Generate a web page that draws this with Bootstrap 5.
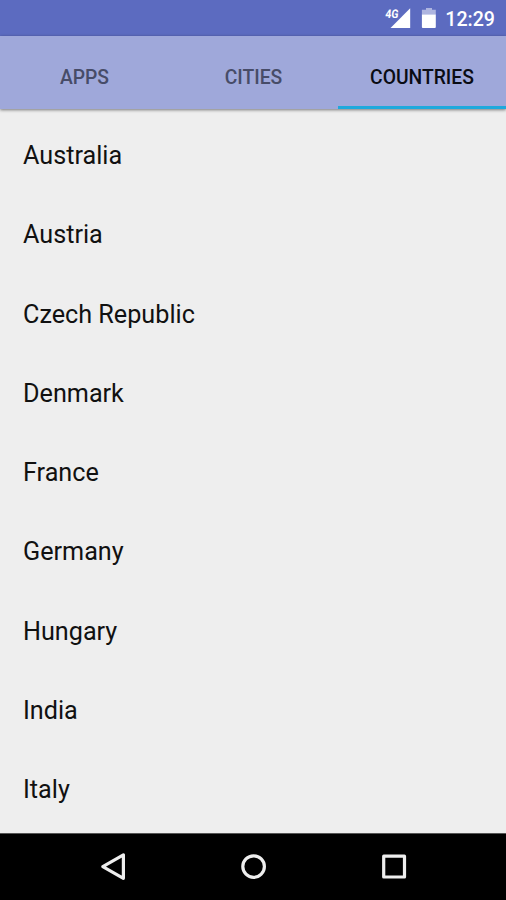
<!DOCTYPE html>
<html lang="en">
<head>
<meta charset="utf-8">
<meta name="viewport" content="width=device-width, initial-scale=1">
<title>Countries</title>
<link href="https://cdn.jsdelivr.net/npm/bootstrap@5.3.0/dist/css/bootstrap.min.css" rel="stylesheet">
<style>
body{font-family:Roboto,"Noto Sans",sans-serif;background:#eee;height:900px;overflow:hidden;color:#111}
.status-bar{height:36px;background:#5c6bc0;padding-right:11px}
.clock{width:50px;font-size:19.6px;font-weight:500;line-height:36px;padding-top:3px;text-align:right}
.tab-strip{height:73px;background:#9fa8da;box-shadow:0 1px 3px rgba(0,0,0,.5);z-index:1}
.tab-strip .nav-link{height:73px;line-height:83px;padding:0;font-size:19.3px;font-weight:500;color:#474c68;border-radius:0;white-space:nowrap}
.tab-strip .nav-link.active{color:#0a0c14;border-bottom:3px solid #1fa9dc}
.tab-strip .nav-link{flex:0 0 169px}
.tab-strip .nav-link.active{flex:0 0 168px}
.countries{padding-top:7px}
.countries .list-group-item{height:79.25px;padding:0 23px;font-size:25.2px;background:transparent;color:#111;line-height:1}
.system-nav{height:67px;border-top:1px solid #555}
svg{display:block}
</style>
</head>
<body class="d-flex flex-column">
<header class="status-bar text-white d-flex justify-content-end align-items-center flex-shrink-0">
<svg width="61" height="36" viewBox="384 0 61 36" fill="#fff" aria-hidden="true">
<path d="M410.2 8.3V28H390.5Z"/>
<text transform="translate(385 17.8) skewX(-6)" font-size="12" font-weight="700" textLength="13" lengthAdjust="spacingAndGlyphs">4G</text>
<path d="M426 8h6v1.7h3.8v5H421.9v-5H426z" fill-opacity=".5"/>
<path d="M421.9 14.5h13.9V27q0 1-1 1h-11.9q-1 0-1-1z"/>
</svg>
<span class="clock">12:29</span>
</header>
<nav class="tab-strip nav position-relative flex-shrink-0 text-center">
<a class="nav-link" href="#">APPS</a><a class="nav-link" href="#">CITIES</a><a class="nav-link active" href="#" aria-current="page">COUNTRIES</a>
</nav>
<main class="flex-grow-1 overflow-hidden">
<ul class="list-group list-group-flush countries">
<li class="list-group-item border-0 d-flex align-items-center">Australia</li>
<li class="list-group-item border-0 d-flex align-items-center">Austria</li>
<li class="list-group-item border-0 d-flex align-items-center">Czech Republic</li>
<li class="list-group-item border-0 d-flex align-items-center">Denmark</li>
<li class="list-group-item border-0 d-flex align-items-center">France</li>
<li class="list-group-item border-0 d-flex align-items-center">Germany</li>
<li class="list-group-item border-0 d-flex align-items-center">Hungary</li>
<li class="list-group-item border-0 d-flex align-items-center">India</li>
<li class="list-group-item border-0 d-flex align-items-center">Italy</li>
</ul>
</main>
<footer class="system-nav bg-black flex-shrink-0 d-flex justify-content-center align-items-center">
<svg width="310" height="32" viewBox="98 851 310 32" fill="none" stroke="#eee" stroke-width="3.2" stroke-linejoin="round" aria-hidden="true">
<path d="M102.8 866.6L123.4 854.9V878.3Z"/>
<circle cx="253.6" cy="866.6" r="10.8"/>
<rect x="383.7" y="856.2" width="20.8" height="20.8"/>
</svg>
</footer>
<script src="https://cdn.jsdelivr.net/npm/bootstrap@5.3.0/dist/js/bootstrap.bundle.min.js"></script>
</body>
</html>
